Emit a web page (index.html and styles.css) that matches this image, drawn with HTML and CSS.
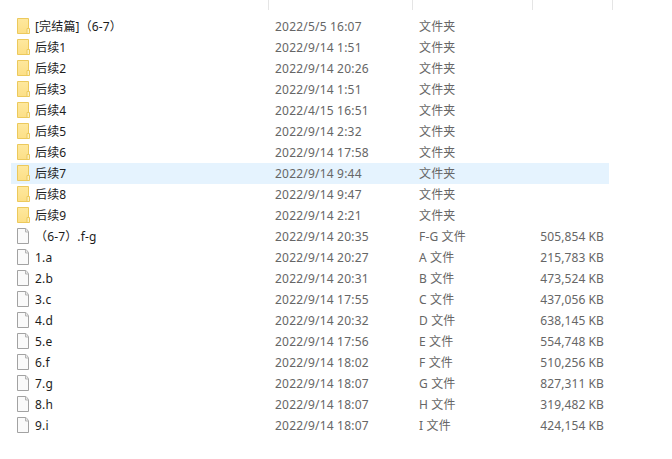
FILE: index.html
```html
<!DOCTYPE html>
<html lang="zh-CN">
<head>
<meta charset="utf-8">
<title>文件列表</title>
<link rel="stylesheet" href="styles.css">
</head>
<body>
<svg class="defs" width="0" height="0">
  <defs>
    <linearGradient id="fg" x1="0" y1="0" x2="0" y2="1"><stop offset="0" stop-color="#fee89e"/><stop offset="1" stop-color="#fcdf86"/></linearGradient>
    <symbol id="folder" viewBox="0 0 13 16">
      <path d="M.5.5h11v15H.5z" fill="url(#fg)" stroke="#ecc95c"/>
      <path d="M10 15.500v-5h2.500v5z" fill="#fdf0c0" stroke="#ecc95c"/>
    </symbol>
    <symbol id="file" viewBox="0 0 13 16">
      <path d="M.5.500h8.500l2.500 3v12H.5z" fill="#fafafa" stroke="#a2a2a2"/>
      <path d="M8.500 .5v3.500h3" fill="#e8e8e8" stroke="#b4b4b4"/>
    </symbol>
  </defs>
</svg>
<div class="header">
  <div class="hcell hname"><span>名称</span></div>
  <div class="hcell hdate"><span>修改日期</span></div>
  <div class="hcell htype"><span>类型</span></div>
  <div class="hcell hsize"><span>大小</span></div>
</div>
<div class="list">
  <div class="row"><span class="name"><svg class="icon"><use href="#folder"/></svg>[完结篇]（6-7）</span><span class="date">2022/5/5 16:07</span><span class="type">文件夹</span><span class="size"></span></div>
  <div class="row"><span class="name"><svg class="icon"><use href="#folder"/></svg>后续1</span><span class="date">2022/9/14 1:51</span><span class="type">文件夹</span><span class="size"></span></div>
  <div class="row"><span class="name"><svg class="icon"><use href="#folder"/></svg>后续2</span><span class="date">2022/9/14 20:26</span><span class="type">文件夹</span><span class="size"></span></div>
  <div class="row"><span class="name"><svg class="icon"><use href="#folder"/></svg>后续3</span><span class="date">2022/9/14 1:51</span><span class="type">文件夹</span><span class="size"></span></div>
  <div class="row"><span class="name"><svg class="icon"><use href="#folder"/></svg>后续4</span><span class="date">2022/4/15 16:51</span><span class="type">文件夹</span><span class="size"></span></div>
  <div class="row"><span class="name"><svg class="icon"><use href="#folder"/></svg>后续5</span><span class="date">2022/9/14 2:32</span><span class="type">文件夹</span><span class="size"></span></div>
  <div class="row"><span class="name"><svg class="icon"><use href="#folder"/></svg>后续6</span><span class="date">2022/9/14 17:58</span><span class="type">文件夹</span><span class="size"></span></div>
  <div class="row selected"><span class="name"><svg class="icon"><use href="#folder"/></svg>后续7</span><span class="date">2022/9/14 9:44</span><span class="type">文件夹</span><span class="size"></span></div>
  <div class="row"><span class="name"><svg class="icon"><use href="#folder"/></svg>后续8</span><span class="date">2022/9/14 9:47</span><span class="type">文件夹</span><span class="size"></span></div>
  <div class="row"><span class="name"><svg class="icon"><use href="#folder"/></svg>后续9</span><span class="date">2022/9/14 2:21</span><span class="type">文件夹</span><span class="size"></span></div>
  <div class="row"><span class="name"><svg class="icon"><use href="#file"/></svg>（6-7）.f-g</span><span class="date">2022/9/14 20:35</span><span class="type">F-G 文件</span><span class="size">505,854 KB</span></div>
  <div class="row"><span class="name"><svg class="icon"><use href="#file"/></svg>1.a</span><span class="date">2022/9/14 20:27</span><span class="type">A 文件</span><span class="size">215,783 KB</span></div>
  <div class="row"><span class="name"><svg class="icon"><use href="#file"/></svg>2.b</span><span class="date">2022/9/14 20:31</span><span class="type">B 文件</span><span class="size">473,524 KB</span></div>
  <div class="row"><span class="name"><svg class="icon"><use href="#file"/></svg>3.c</span><span class="date">2022/9/14 17:55</span><span class="type">C 文件</span><span class="size">437,056 KB</span></div>
  <div class="row"><span class="name"><svg class="icon"><use href="#file"/></svg>4.d</span><span class="date">2022/9/14 20:32</span><span class="type">D 文件</span><span class="size">638,145 KB</span></div>
  <div class="row"><span class="name"><svg class="icon"><use href="#file"/></svg>5.e</span><span class="date">2022/9/14 17:56</span><span class="type">E 文件</span><span class="size">554,748 KB</span></div>
  <div class="row"><span class="name"><svg class="icon"><use href="#file"/></svg>6.f</span><span class="date">2022/9/14 18:02</span><span class="type">F 文件</span><span class="size">510,256 KB</span></div>
  <div class="row"><span class="name"><svg class="icon"><use href="#file"/></svg>7.g</span><span class="date">2022/9/14 18:07</span><span class="type">G 文件</span><span class="size">827,311 KB</span></div>
  <div class="row"><span class="name"><svg class="icon"><use href="#file"/></svg>8.h</span><span class="date">2022/9/14 18:07</span><span class="type">H 文件</span><span class="size">319,482 KB</span></div>
  <div class="row"><span class="name"><svg class="icon"><use href="#file"/></svg>9.i</span><span class="date">2022/9/14 18:07</span><span class="type">I 文件</span><span class="size">424,154 KB</span></div>
</div>
</body>
</html>
```
FILE: styles.css
```css
html, body {
  margin: 0;
  padding: 0;
  background: #fff;
  overflow: hidden;
}
body {
  width: 672px;
  height: 459px;
  font-family: "Noto Sans", "Noto Sans CJK SC", sans-serif;
  font-size: 12px;
  color: #1c1c1c;
}
.defs {
  display: block;
  height: 0;
}
.header {
  display: flex;
  height: 10px;
  overflow: hidden;
  margin-left: 11px;
  width: 602px;
  color: #4c607a;
}
.hcell {
  box-sizing: border-box;
  border-right: 1px solid #e5e5e5;
  height: 10px;
  line-height: 16px;
  padding-left: 7px;
  overflow: hidden;
}
.hcell span {
  display: block;
  margin-top: -13px;
}
.hname { width: 258px; padding-left: 5px; }
.hdate { width: 144px; }
.htype { width: 120px; }
.hsize { width: 80px; }
.list {
  margin-top: 6px;
  margin-left: 11px;
  width: 598px;
}
.row {
  display: grid;
  grid-template-columns: 264px 144px 120px 65px;
  height: 21px;
  line-height: 21px;
  white-space: nowrap;
}
.selected {
  background: #e5f3fe;
}
.name {
  display: flex;
  align-items: flex-start;
  padding-left: 6px;
  letter-spacing: 0.15px;
}
.icon {
  width: 13px;
  height: 16px;
  margin-top: 2px;
  margin-right: 5px;
  flex: none;
}
.date, .type, .size {
  color: #666;
}
.date {
  letter-spacing: 0.2px;
}
.type {
  letter-spacing: 0.15px;
}
.size {
  text-align: right;
  letter-spacing: 0.1px;
}
```
